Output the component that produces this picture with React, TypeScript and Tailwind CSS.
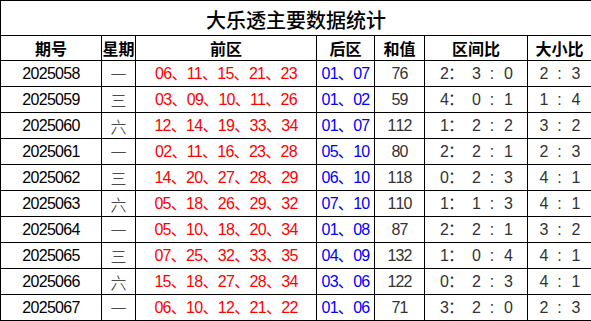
const rows = [
  ['2025058', '一', '06、11、15、21、23', '01、07', '76', '2：3：0', '2：3'],
  ['2025059', '三', '03、09、10、11、26', '01、02', '59', '4：0：1', '1：4'],
  ['2025060', '六', '12、14、19、33、34', '01、07', '112', '1：2：2', '3：2'],
  ['2025061', '一', '02、11、16、23、28', '05、10', '80', '2：2：1', '2：3'],
  ['2025062', '三', '14、20、27、28、29', '06、10', '118', '0：2：3', '4：1'],
  ['2025063', '六', '05、18、26、29、32', '07、10', '110', '1：1：3', '4：1'],
  ['2025064', '一', '05、10、18、20、34', '01、08', '87', '2：2：1', '3：2'],
  ['2025065', '三', '07、25、32、33、35', '04、09', '132', '1：0：4', '4：1'],
  ['2025066', '六', '15、18、27、28、34', '03、06', '122', '0：2：3', '4：1'],
  ['2025067', '一', '06、10、12、21、22', '01、06', '71', '3：2：0', '2：3'],
]

const headers = ['期号', '星期', '前区', '后区', '和值', '区间比', '大小比']

// fixed 8px pitch for half-width chars, like the Excel font in the shot
const Mono = ({ text }: { text: string }) => (
  <span className="inline-flex items-center justify-center">
    {text.split('').map((ch, i) =>
      ch === '：' ? (
        <span key={i} className="inline-block w-[16px] text-left">
          ：
        </span>
      ) : (
        <span key={i} className="inline-block w-[8px] text-center">
          {ch === ' ' ? '\u00a0' : ch}
        </span>
      ),
    )}
  </span>
)

// "2：3：0" -> "2： 3 : 0"
const ratio3 = (r: string) => {
  const [a, b, c] = r.split('：')
  return `${a}： ${b} : ${c}`
}

const ratio2 = (r: string) => {
  const [a, b] = r.split('：')
  return `${a} : ${b}`
}

const App = () => {
  return (
    <div className="h-[321px] w-[591px] bg-white" style={{ fontFamily: '"Liberation Sans", "Noto Sans CJK SC", sans-serif' }}>
      <table className="w-[591px] table-fixed border-collapse text-black">
        <colgroup>
          <col className="w-[101px]" />
          <col className="w-[34px]" />
          <col className="w-[181px]" />
          <col className="w-[58px]" />
          <col className="w-[50px]" />
          <col className="w-[103px]" />
          <col className="w-[64px]" />
        </colgroup>
        <tbody>
          <tr className="h-[35px]">
            <td colSpan={7} className="border border-black p-0 pt-[3px] text-center text-[20px] font-medium leading-none" style={{ fontFamily: '"Noto Sans CJK SC", sans-serif' }}>
              大乐透主要数据统计
            </td>
          </tr>
          <tr className="h-[25px]">
            {headers.map((h) => (
              <td
                key={h}
                className="whitespace-nowrap border border-black p-0 text-center text-[16px] font-bold leading-none"
                style={{ fontFamily: '"Noto Sans CJK SC", sans-serif' }}
              >
                {h}
              </td>
            ))}
          </tr>
          {rows.map((r) => (
            <tr key={r[0]} className="h-[26px]">
              <td className="border border-black p-0 text-center text-[16px] leading-none tracking-[-0.7px]">{r[0]}</td>
              <td className="border border-black p-0 text-center text-[16px] font-light leading-none text-[#222]" style={{ fontFamily: '"Noto Sans CJK SC", sans-serif' }}>
                {r[1]}
              </td>
              <td className="whitespace-nowrap border border-black p-0 text-center text-[16px] leading-none tracking-[-0.7px] text-[#ff0000]">
                {r[2]}
              </td>
              <td className="whitespace-nowrap border border-black p-0 text-center text-[16px] leading-none tracking-[-0.7px] text-[#0000ff]">
                {r[3]}
              </td>
              <td className="border border-black p-0 text-center text-[16px] leading-none text-[#333]">
                <Mono text={r[4]} />
              </td>
              <td className="border border-black p-0 text-center text-[16px] leading-none text-[#333]">
                <Mono text={ratio3(r[5])} />
              </td>
              <td className="border border-black p-0 text-center text-[16px] leading-none text-[#333]">
                <Mono text={ratio2(r[6])} />
              </td>
            </tr>
          ))}
        </tbody>
      </table>
    </div>
  )
}

export default App
